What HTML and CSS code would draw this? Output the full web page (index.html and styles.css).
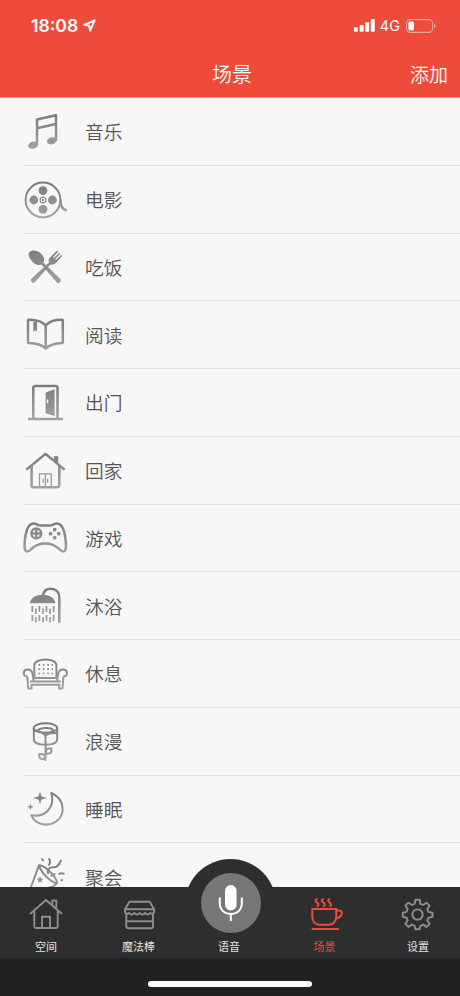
FILE: index.html
```html
<!DOCTYPE html>
<html lang="zh-CN">
<head>
  <meta charset="UTF-8">
  <meta name="viewport" content="width=device-width, initial-scale=1.0">
  <title>场景</title>
  <link rel="stylesheet" href="styles.css">
</head>
<body>

<svg class="defs" width="0" height="0">
  <defs>
    <linearGradient id="metal" gradientUnits="userSpaceOnUse" x1="0" y1="6" x2="0" y2="42">
      <stop offset="0" stop-color="#7b7b7b"/>
      <stop offset="1" stop-color="#a4a4a4"/>
    </linearGradient>
  </defs>
</svg>

<div class="app">
  <header class="header">
    <div class="status">
      <div class="status-left">
        <span class="time">18:08</span>
        <svg class="location" viewBox="0 0 13 13"><path d="M1.2 5.8 11.6 1.3 7.2 11.6 6.2 6.8Z"/></svg>
      </div>
      <div class="status-right">
        <svg class="signal" viewBox="0 0 21 13">
          <rect x="0" y="8.3" width="4" height="4.5" rx="1"/>
          <rect x="5.7" y="6" width="4" height="6.8" rx="1"/>
          <rect x="11.2" y="3.2" width="4" height="9.6" rx="1"/>
          <rect x="16.8" y="0" width="4" height="12.8" rx="1"/>
        </svg>
        <span class="network">4G</span>
        <svg class="battery" viewBox="0 0 30 14">
          <rect class="shell" x=".6" y=".6" width="26" height="12.8" rx="3.8"/>
          <rect class="level" x="2.4" y="2.4" width="5.6" height="9.2" rx="1.8"/>
          <path class="cap" d="M28 4.8c2 .7 2 3.7 0 4.4z"/>
        </svg>
      </div>
    </div>
    <div class="titlebar">
      <h1>场景</h1>
      <a class="add">添加</a>
    </div>
  </header>

  <main class="list">
    <div class="row">
      <svg class="icon" viewBox="0 0 48 48">
        <path d="M16 37V11.5L35 7.2V33M16 20.3 35 16"/>
        <ellipse class="solid" cx="12" cy="37.2" rx="4.9" ry="3.5" transform="rotate(-14 12 37.2)"/>
        <ellipse class="solid" cx="30.8" cy="32.8" rx="4.9" ry="3.5" transform="rotate(-14 30.8 32.8)"/>
      </svg>
      <div class="name">音乐</div>
    </div>
    <div class="row">
      <svg class="icon" viewBox="0 0 48 48">
        <circle cx="22" cy="24" r="17.4" stroke-width="2"/>
        <circle class="solid" cx="22" cy="14.6" r="4.4"/>
        <circle class="solid" cx="12.8" cy="24" r="4.4"/>
        <circle class="solid" cx="31.4" cy="24" r="4.4"/>
        <circle class="solid" cx="22" cy="33.4" r="4.4"/>
        <circle class="thin" cx="22" cy="24" r="2.9"/>
        <circle class="solid" cx="22" cy="24" r="1.2"/>
        <path d="M39.4 23c0 6 2 11 6.4 11.2"/>
      </svg>
      <div class="name">电影</div>
    </div>
    <div class="row">
      <svg class="icon" viewBox="0 0 48 48">
        <path class="solid" d="M8.3 9.2c3-3 8.8-1.5 12.1 1.9 3 3.1 3.3 6.2 2 8.500L39 35.800a2.400 2.400 0 0 1-3.400 3.400L20.400 21.400c-2.600 1.300-6.200.3-9-2.700-3.200-3.400-5-7.600-3.100-9.500z"/>
        <path class="solid" d="M36.200 7.600l.9.900-5 5.800.7.700 5.700-5.200.8.800-5.200 5.700.7.700 5.700-5.100.8.900-5.600 6.500c-1.900 2.200-4.200 2.700-6.300 2.200L14 38.900A2.400 2.400 0 0 1 10.600 35.500L28 19.600c-.8-2.200-.2-4.200 1.800-5.900z"/>
      </svg>
      <div class="name">吃饭</div>
    </div>
    <div class="row">
      <svg class="icon" viewBox="0 0 48 48">
        <path d="M24.7 14.3C20.500 9.800 14 8.600 7.800 8.700q-.8 0-.8.800V31.300q0 .7.800.8C14 32.300 20.500 33.700 24.700 37.500 29 33.700 35.400 32.300 41 32.100q.8-.1.800-.8V9.500q0-.8-.8-.8C35.400 8.600 29 9.800 24.700 14.300Z"/>
        <path d="M24.700 14.300V37.500"/>
        <path class="solid" d="M12.300 10.500h3.800V21l-1.900-1.800L12.300 21z"/>
      </svg>
      <div class="name">阅读</div>
    </div>
    <div class="row">
      <svg class="icon" viewBox="0 0 48 48">
        <path d="M12.300 39.500V9q0-2 2-2H34.500q2 0 2 2V39.500"/>
        <path d="M7 39.900H42"/>
        <path class="solid" d="M24.600 13.500 33.600 10.200V37L24.600 34.300Z"/>
        <rect class="hole" x="25.800" y="20.200" width="1.500" height="4" rx=".7"/>
      </svg>
      <div class="name">出门</div>
    </div>
    <div class="row">
      <svg class="icon" viewBox="0 0 48 48">
        <path d="M5.300 22.700 24.500 6.900 43.700 22.700"/>
        <path d="M10.600 19V38.400q0 1.800 1.800 1.800H36.500q1.800 0 1.800-1.800V19"/>
        <path class="solid" d="M32.800 9.300H37.200V17.300L32.800 13.700z"/>
        <path class="thin" d="M18.500 40V26.800H30.300V40M24.400 27V40M22.200 31.800v4M26.600 31.800v4"/>
      </svg>
      <div class="name">回家</div>
    </div>
    <div class="row">
      <svg class="icon" viewBox="0 0 48 48">
        <path d="M11.500 9.700C15.500 9 16.500 11.600 20 11.600H28.500C32 11.600 33 9 37 9.700 42 10.500 43.600 17.300 44.500 25 45.300 31.500 45.500 37.500 42.300 37.500 37.500 37.500 37.500 29.500 24.300 29.500 11 29.500 11 37.500 6.200 37.500 3 37.500 3.200 31.500 4 25 4.900 17.300 6.500 10.500 11.500 9.700Z"/>
        <circle cx="15.300" cy="19.500" r="4.900"/>
        <path d="M15.300 15.500v8M11.300 19.500h8"/>
        <circle class="solid" cx="33.700" cy="15.700" r="1.900"/>
        <circle class="solid" cx="33.700" cy="23.700" r="1.900"/>
        <circle class="solid" cx="29.600" cy="19.700" r="1.900"/>
        <circle class="solid" cx="37.800" cy="19.700" r="1.900"/>
      </svg>
      <div class="name">游戏</div>
    </div>
    <div class="row">
      <svg class="icon" viewBox="0 0 48 48">
        <path class="solid" d="M9 21.200c0-4.500 5.300-8.400 12.600-8.400s12.600 3.900 12.600 8.400z"/>
        <path d="M22 13C22.800 9 26 6.700 29.800 6.700 34.500 6.700 38.300 9.800 38.300 15V40.700"/>
        <path class="drops" d="M11.300 24v6M18.400 24v6M25.500 24v6M32.600 24v6M14.800 26.500v5.500M22 26.500v5.500M29 26.500v5.500M11.300 33v6M18.400 33v6M25.500 33v6M32.600 33v6M14.800 35v5.500M22 35v5.500M29 35v5.500"/>
      </svg>
      <div class="name">沐浴</div>
    </div>
    <div class="row">
      <svg class="icon medium" viewBox="0 0 48 48">
        <path d="M13.300 27.500V15C13.300 11.500 19 9.500 24.300 9.500S35.400 11.500 35.400 15V27.500"/>
        <path d="M12.500 28H36.200M9 31.400H39.800M9.500 34.800H39.300"/>
        <path d="M6.300 26.500C3.700 26.500 2.600 24.800 2.800 22.800 3 20.700 4.500 19.600 6.500 19.600 9.700 19.600 11.300 21.500 11.700 24.500L12.600 31M6.300 26.500 7.200 38.500H10.600V35"/>
        <path d="M42.400 26.500C45 26.500 46.100 24.800 45.900 22.800 45.700 20.700 44.200 19.600 42.200 19.600 39 19.600 37.400 21.500 37 24.500L36.100 31M42.400 26.500 41.500 38.500H38.100V35"/>
        <path class="dots" d="M17.400 14.900H32M17.400 19.200H32M17.400 23.500H32"/>
      </svg>
      <div class="name">休息</div>
    </div>
    <div class="row">
      <svg class="icon medium" viewBox="0 0 48 48">
        <ellipse cx="24.500" cy="10" rx="11.700" ry="4.700"/>
        <path d="M12.800 10V21C12.800 24.800 17.500 26.700 24.500 26.700S36.200 24.800 36.200 21V10"/>
        <path d="M13.500 12.500C17.500 13 22 14.500 24.500 17.500 27.500 15.500 31.500 14.600 36 15.200M24.500 17.500V43M16 13.200C18.500 9.500 30 9 32 12 31.500 15 27 15.800 24 14.500"/>
        <path d="M25 36V33Q25 30.500 28 30.500H30.500V32.500Q30.500 35.500 27.500 35.500ZM24 41V38.700Q23.500 36 20.700 36H18.200V38Q18.500 41 21.500 41Z"/>
      </svg>
      <div class="name">浪漫</div>
    </div>
    <div class="row">
      <svg class="icon medium" viewBox="0 0 48 48">
        <path d="M30.300 8C43.500 13.500 45 29 35.500 36.300 26.500 42.800 14 39 10.300 30.300 24 32.700 34.500 22.500 30.300 8Z"/>
        <path class="solid" d="M19 6.800l1.500 4.600 5.300 1.500-5.300 1.500L19 19l-1.500-4.600-5.300-1.500 5.300-1.500zM9.400 18.500l.9 2.400 2.400.9-2.400.9-.9 2.400-.9-2.400-2.400-.9 2.400-.9z"/>
      </svg>
      <div class="name">睡眠</div>
    </div>
    <div class="row">
      <svg class="icon medium" viewBox="0 0 48 48">
        <path d="M9.200 36 18 12.300C23 11.500 36 24 36 30.300L32 33.500 11 39Z"/>
        <path d="M18 12.300C19.500 19 29.500 29.500 36 30.300"/>
        <path d="M27.500 21C25.500 17 28.500 13.800 32.500 14.200 38 14.500 38.500 9.500 40.300 7M30 23.500C31 21.500 33 21 34.500 21.300"/>
        <path d="M20.500 5.500 22.500 8M27.500 5.500C30 7 29 11 27.500 12.500M37.500 21.500C39.500 19.800 41.500 20 43.500 21M39.500 27l2.500.3"/>
        <path class="solid" d="M19 23.300l1 2.200 2.400.3-1.800 1.600.5 2.400-2.100-1.200-2.100 1.200.5-2.400-1.800-1.600 2.400-.3z"/>
      </svg>
      <div class="name">聚会</div>
    </div>
  </main>

  <nav class="tabbar">
    <a class="tab">
      <svg class="tab-icon" viewBox="0 0 36 36">
        <path d="M2 18 18 4 34 18M6.300 14.500V30.500Q6.300 32 7.800 32H28.200Q29.700 32 29.700 30.500V14.500M14 32V20.800H22V32M24.300 9V4.500H28.300V12.500"/>
      </svg>
      <span>空间</span>
    </a>
    <a class="tab">
      <svg class="tab-icon" viewBox="0 0 36 36">
        <path d="M8.500 5.700H28.700L33.200 13.300H4ZM4 13.300V16.500Q5.700 18.700 8 17Q10.300 20 13.200 17Q15.700 20 18.600 17Q21.300 20 24 17Q26.700 20 29.200 17Q31.700 18.700 33.200 16.500V13.300M5.300 18V30.300Q5.300 32.300 7.300 32.300H30Q32 32.300 32 30.300V18M5.300 25.200H32"/>
      </svg>
      <span>魔法棒</span>
    </a>
    <a class="tab voice">
      <div class="dome">
        <div class="mic">
          <svg viewBox="0 0 60 60">
            <rect x="24" y="12" width="11.600" height="25.500" rx="5.800"/>
            <path d="M18.800 24.500V30C18.800 37 23.600 41 29.800 41S40.800 37 40.800 30V24.500M29.800 41V48"/>
          </svg>
        </div>
      </div>
      <span>语音</span>
    </a>
    <a class="tab active">
      <svg class="tab-icon" viewBox="0 0 36 36">
        <path d="M5.300 13H29.300V20.500C29.300 25.500 26 28.700 21.500 28.700H13C8.500 28.700 5.300 25.500 5.300 20.500ZM29.300 14.500H32.500C36.500 14.500 35.500 21.500 28.500 22.800M4.700 33H31.700"/>
        <path d="M10.300 2.500C6.800 5 9 5.800 10.500 7 12 8.200 11.500 9.500 10 10.800M16.600 2.500C13.100 5 15.300 5.800 16.800 7 18.300 8.200 17.800 9.500 16.300 10.800M22.900 2.500C19.400 5 21.600 5.800 23.100 7 24.600 8.200 24.100 9.500 22.600 10.800"/>
      </svg>
      <span>场景</span>
    </a>
    <a class="tab">
      <svg class="tab-icon" viewBox="0 0 36 36">
        <path d="M15.400 3.800H19.600L20.400 7.800 23.200 9 26.600 6.700 29.600 9.700 27.300 13.100 28.500 15.900 32.500 16.700V20.900L28.500 21.700 27.300 24.500 29.600 27.900 26.600 30.900 23.200 28.600 20.400 29.800 19.600 33.200H15.400L14.600 29.800 11.800 28.600 8.400 30.900 5.400 27.900 7.700 24.500 6.500 21.700 2.800 20.900V16.700L6.500 15.900 7.700 13.100 5.400 9.700 8.400 6.700 11.800 9 14.600 7.800Z"/>
        <circle cx="17.500" cy="18.600" r="5.200"/>
      </svg>
      <span>设置</span>
    </a>
  </nav>
  <footer class="bottom"><div class="home-indicator"></div></footer>
</div>

</body>
</html>
```
FILE: styles.css
```css
* { box-sizing: border-box; }
body { margin: 0; font-family: "Noto Sans CJK SC", sans-serif; background: #f7f7f7; color: #555; }
h1 { margin: 0; font-weight: 350; }
.defs { position: absolute; }
.app { width: 460px; height: 996px; display: flex; flex-direction: column; overflow: hidden; }

/* Header */
.header { height: 98px; flex: none; background: #ee4b3b; color: #fff; border-bottom: 1px solid #f3978d; }
.status { height: 51px; padding: 0 24px 0 31px; display: flex; justify-content: space-between; align-items: center; font-family: Inter, sans-serif; }
.status-left, .status-right { display: flex; align-items: center; }
.time { font-size: 17.6px; font-weight: 600; }
.location { width: 13px; height: 13px; margin-left: 5px; fill: none; stroke: #fff; stroke-width: 1.9; stroke-linejoin: round; }
.signal { width: 21px; height: 13px; fill: #fff; }
.network { font-size: 14.5px; font-weight: 400; margin: 0 6px 0 5px; }
.battery { width: 30px; height: 14px; }
.shell { fill: none; stroke: #f7a39a; stroke-width: 1.1; }
.level { fill: #fff; }
.cap { fill: #f7a39a; }
.titlebar { height: 44px; padding: 0 12px; display: grid; grid-template-columns: 1fr auto 1fr; align-items: center; }
.titlebar h1 { grid-column: 2; font-size: 20px; margin-left: 4px; }
.add { justify-self: end; font-size: 19px; font-weight: 350; }

/* Scene list */
.list { flex: 1; min-height: 0; overflow: hidden; }
.row { height: 67.75px; margin-left: 24px; display: flex; align-items: center; border-bottom: 1px solid #e1e1e1; }
.icon { width: 48px; height: 48px; flex: none; margin: 1px 16px 0 -3px; fill: none; stroke: url(#metal); stroke-width: 2.5; stroke-linejoin: round; }
.icon.medium { stroke-width: 2; }
.icon .thin { stroke-width: 1.3; }
.icon .solid { fill: url(#metal); stroke: none; }
.icon .hole { fill: #f7f7f7; stroke: none; }
.icon .drops { stroke-width: 1.7; }
.icon .dots { stroke-width: 1.7; stroke-dasharray: 1.7 2.7; }
.name { font-size: 18.7px; font-weight: 350; line-height: 20px; }

/* Tab bar */
.tabbar { height: 71px; flex: none; background: #2e2e2e; display: grid; grid-template-columns: 92px 93px 88px 103px 84px; }
.tab { position: relative; display: flex; flex-direction: column; align-items: center; justify-content: flex-end; padding-bottom: 4px; color: #e4e4e4; font-size: 11px; line-height: 16px; }
.tab span { position: relative; }
.tab-icon { width: 36px; height: 36px; margin-bottom: 6px; fill: none; stroke: #8e8e8e; stroke-width: 1.9; stroke-linejoin: round; }
.tab.active { color: #ee4b3b; }
.tab.active .tab-icon { stroke: #ee4b3b; stroke-width: 2; }
.dome { position: absolute; left: 0; top: -28px; width: 91px; height: 91px; border-radius: 50%; background: #2e2e2e; padding: 14px 0 0 15.5px; }
.mic { width: 60px; height: 60px; border-radius: 50%; background: #777; }
.mic svg { display: block; width: 60px; height: 60px; fill: #fff; }
.mic path { fill: none; stroke: #fff; stroke-width: 2; }

.bottom { height: 38px; flex: none; background: #222; display: flex; justify-content: center; align-items: flex-end; padding-bottom: 9px; }
.home-indicator { width: 164px; height: 6px; border-radius: 3px; background: #fff; }
```
